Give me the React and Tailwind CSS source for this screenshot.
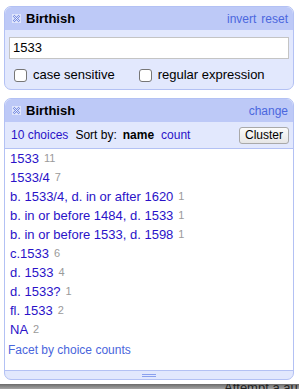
import React from "react"

const choices = [
  ["1533", 11],
  ["1533/4", 7],
  ["b. 1533/4, d. in or after 1620", 1],
  ["b. in or before 1484, d. 1533", 1],
  ["b. in or before 1533, d. 1598", 1],
  ["c.1533", 6],
  ["d. 1533", 4],
  ["d. 1533?", 1],
  ["fl. 1533", 2],
  ["NA", 2],
]

function CloseIcon() {
  return (
    <svg width="9" height="9" viewBox="0 0 9 9" className="shrink-0">
      <rect x="0" y="0" width="9" height="9" fill="#dfe5fb" />
      <path d="M1.5 1.5 L7.5 7.5 M7.5 1.5 L1.5 7.5" stroke="#6f86e0" strokeWidth="2" />
      <path d="M1.5 1.5 L7.5 7.5 M7.5 1.5 L1.5 7.5" stroke="#ffffff" strokeWidth="0.8" />
    </svg>
  )
}

function Header({ right }) {
  return (
    <div className="flex items-center h-[23px] bg-[#bdc9f7] rounded-t-[7px] pl-[7px] pr-[5px]">
      <CloseIcon />
      <span className="ml-[5px] text-[13px] font-bold text-black">Birthish</span>
      <div className="ml-auto text-[12px] text-[#4b67de] flex gap-[5px]">{right}</div>
    </div>
  )
}

export default function App() {
  return (
    <div className="w-[299px] h-[389px] bg-white overflow-hidden" style={{ fontFamily: '"Liberation Sans", Arial, sans-serif' }}>
      <div className="h-[384px] pt-[6px] px-[4px]">
        <div className="w-[290px] border border-[#b3c1f4] rounded-[7px] bg-[#e2e8fd]">
          <Header right={<><span>invert</span><span>reset</span></>} />
          <div className="px-[4px] pt-[5px] pb-[6px]">
            <input
              readOnly
              value="1533"
              className="w-[280px] h-[22px] bg-white border border-[#c4c4c4] px-[3px] text-[13px] text-black outline-none"
            />
            <div className="flex items-center mt-[8px] h-[16px] text-[13px] text-black">
              <span className="ml-[5px] w-[13px] h-[13px] border border-[#767676] rounded-[3px] bg-white" />
              <span className="ml-[6px]">case sensitive</span>
              <span className="ml-[24px] w-[13px] h-[13px] border border-[#767676] rounded-[3px] bg-white" />
              <span className="ml-[6px]">regular expression</span>
            </div>
          </div>
        </div>

        <div className="mt-[8px] w-[290px] border border-[#b3c1f4] rounded-[7px] bg-[#e2e8fd]">
          <Header right={<span>change</span>} />
          <div className="flex items-center h-[26px] pl-[6px] pr-[4px] text-[12px]">
            <span className="text-[#2a12c8]">10 choices</span>
            <span className="ml-[7px] text-black">Sort by:</span>
            <span className="ml-[6px] font-bold text-black">name</span>
            <span className="ml-[7px] text-[#2a12c8]">count</span>
            <button className="ml-auto h-[17px] px-[5px] text-[12px] text-black bg-gradient-to-b from-[#fbfbfb] to-[#e6e6e6] border border-[#a9a9a9] rounded-[3px] leading-none">
              Cluster
            </button>
          </div>
          <div className="bg-white border-t border-[#b3c1f4] h-[222px] pl-[5px]">
            {choices.map(([label, count]) => (
              <div key={label} className="h-[19px] flex items-center">
                <span className="text-[13px] text-[#2a12c8]">{label}</span>
                <span className="ml-[5px] text-[11px] text-[#9a9a9a]">{count}</span>
              </div>
            ))}
            <div className="mt-[1px] h-[19px] flex items-center text-[12px] text-[#4a66dc] -ml-[2px]">
              Facet by choice counts
            </div>
          </div>
          <div className="h-[9px] border-t border-[#b3c1f4] rounded-b-[7px] flex justify-center items-center">
            <div className="w-[14px] h-[3px] border-y border-[#8aa0ee]" />
          </div>
        </div>
      </div>
      <div className="relative h-[5px] bg-gradient-to-b from-[#6b6b6b] to-[#a5a5a5] overflow-hidden">
        <span className="absolute left-[224px] top-[-3px] text-[13px] leading-[13px] text-[#222]">Attempt a au</span>
      </div>
    </div>
  )
}
